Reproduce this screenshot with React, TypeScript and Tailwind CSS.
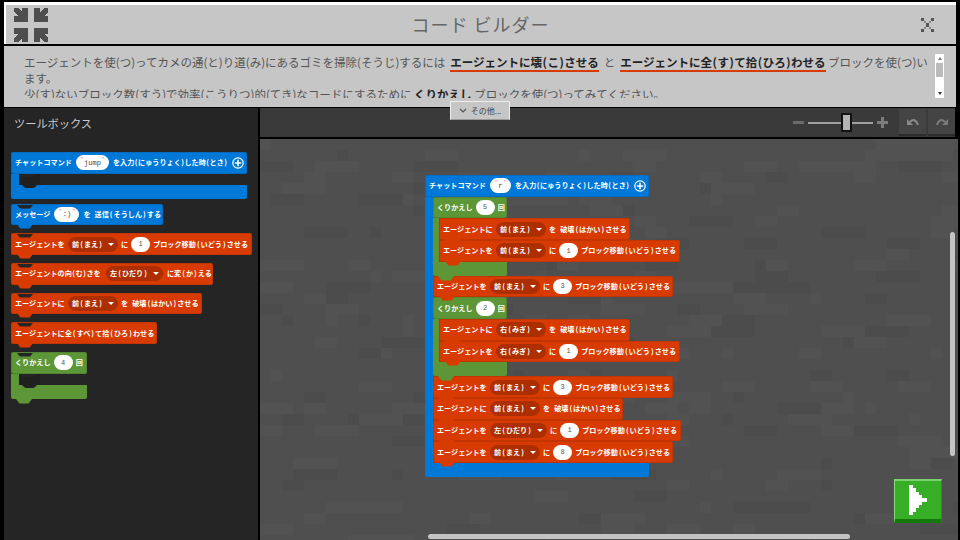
import React from "react";

const RED = "#d83b01";
const BLUE = "#0078d7";
const GREEN = "#5c9636";

const T = ({ s, cls = "mx-[1px]" }: { s: string; cls?: string }) => (
  <>
    {s.split(/([()])/).map((p, i) =>
      p === "(" || p === ")" ? (
        <span key={i} className={cls}>
          {p}
        </span>
      ) : (
        <React.Fragment key={i}>{p}</React.Fragment>
      )
    )}
  </>
);

const Tab = ({ color }: { color: string }) => (
  <svg width="17" height="5" viewBox="0 0 17 5" className="absolute left-[5px] top-full z-10 block">
    <path d="M0 0 L3 4 Q3.5 4.5 4 4.5 L12 4.5 Q12.5 4.5 13 4 L16 0 Z" fill={color} />
  </svg>
);

const Notch = () => (
  <svg width="17" height="4" viewBox="0 0 17 4" className="absolute left-[5px] top-0 block">
    <path d="M0 0 L3 3.5 L13 3.5 L16 0 Z" fill="#252525" />
  </svg>
);

const Pill = ({ children }: { children: React.ReactNode }) => (
  <span className="flex h-[15px] w-[19px] shrink-0 items-center justify-center rounded-full bg-white font-['Liberation_Mono',monospace] text-[7px] font-normal text-[#555]">
    {children}
  </span>
);

const Str = ({ children, w }: { children: React.ReactNode; w: string }) => (
  <span className={`relative flex h-[15px] shrink-0 items-center justify-center rounded-full bg-white font-['Liberation_Mono',monospace] text-[7px] font-normal text-[#444] ${w}`}>
    <span className="absolute left-[4px] top-[2px] text-[6px] leading-none text-[#c99]">"</span>
    {children}
    <span className="absolute right-[4px] top-[2px] text-[6px] leading-none text-[#c99]">"</span>
  </span>
);

const Drop = ({ children, w }: { children: string; w: string }) => (
  <span className={`flex h-[15px] shrink-0 items-center justify-center gap-[5px] rounded-full bg-[#ad2f01] ${w}`}>
    <span>
      <T s={children} />
    </span>
    <span className="h-0 w-0 border-x-[3px] border-t-[3px] border-x-transparent border-t-white" />
  </span>
);

const Plus = () => (
  <svg width="12" height="12" viewBox="0 0 12 12" className="shrink-0">
    <circle cx="6" cy="6" r="5.2" fill="none" stroke="#fff" strokeWidth="1.2" />
    <path d="M6 2.8V9.2M2.8 6H9.2" stroke="#fff" strokeWidth="1.6" />
  </svg>
);

const Row = ({ bg, w, gap, notch, tab = true, children }: { bg: string; w: string; gap?: string; notch?: boolean; tab?: boolean; children: React.ReactNode }) => (
  <div
    className={`relative flex h-[21.67px] shrink-0 items-center whitespace-nowrap rounded-[2px] border border-black/10 pl-[3px] font-['Noto_Sans_CJK_JP',sans-serif] text-[7.14px] font-bold text-white ${w} ${gap ?? "gap-[3px]"}`}
    style={{ backgroundColor: bg }}
  >
    {notch && <Notch />}
    {children}
    {tab && <Tab color={bg} />}
  </div>
);

type Dir = "mae" | "migi" | "hidari";
const label: Record<Dir, string> = { mae: "前(まえ)", migi: "右(みぎ)", hidari: "左(ひだり)" };

const Move = ({ d, n, w, notch }: { d: Dir; n: string; w: string; notch?: boolean }) => (
  <Row bg={RED} w={w} notch={notch}>
    <span className="w-[50px]">エージェントを</span>
    <Drop w={d === "hidari" ? "w-[57px]" : "w-[50px]"}>{label[d]}</Drop>
    <span>に</span>
    <Pill>{n}</Pill>
    <span>
      <T s="ブロック移動(いどう)させる" />
    </span>
  </Row>
);

const Destroy = ({ d, notch, w = "w-[191px]" }: { d: Dir; notch?: boolean; w?: string }) => (
  <Row bg={RED} w={w} notch={notch}>
    <span className="w-[50px]">エージェントに</span>
    <Drop w="w-[50px]">{label[d]}</Drop>
    <span>を</span>
    <span className="ml-[1px]">
      <T s="破壊(はかい)させる" />
    </span>
  </Row>
);

const Loop = ({ n, children }: { n: string; children: React.ReactNode }) => (
  <div className="relative flex flex-col">
    <Row bg={GREEN} w="w-[74px]" tab={false}>
      <span>くりかえし</span>
      <Pill>{n}</Pill>
      <span>回</span>
    </Row>
    <div className="flex">
      <div className="w-[6px] shrink-0" style={{ backgroundColor: GREEN }} />
      <div className="flex flex-col">{children}</div>
    </div>
    <div className="relative h-[14px] w-[74px] rounded-b-[2px]" style={{ backgroundColor: GREEN }}>
      <Tab color={GREEN} />
    </div>
  </div>
);

const GapNotch = () => (
  <svg width="21" height="14" viewBox="0 0 21 14" className="absolute left-[8px] top-0 z-10 block">
    <path d="M0 0 L3 3 H14 L18 0 H21 V11 H18 L16 13 Q15 14 14 14 H7 Q6 14 5 13 L3 11 H0 Z" fill="#202020" />
  </svg>
);

const Toolbox = () => (
  <aside className="flex w-[254px] shrink-0 flex-col bg-[#252525] pl-[7px]">
    <div className="pb-[20px] pl-[3px] pt-[6px] font-['Noto_Sans_CJK_JP',sans-serif] text-[11.2px] leading-[18px] text-[#ccc]">ツールボックス</div>
    <div className="flex flex-col">
      <Row bg={BLUE} w="w-[236px]" tab={false} gap="gap-[4px]">
        <span>チャットコマンド</span>
        <Str w="w-[33px]">jump</Str>
        <span>
          <T s="を入力(にゅうりょく)した時(とき)" cls="mx-[0.5px]" />
        </span>
        <Plus />
      </Row>
      <div className="relative flex h-[11px]">
        <div className="w-[8px]" style={{ backgroundColor: BLUE }} />
        <GapNotch />
      </div>
      <div className="relative h-[14px] w-[236px] rounded-b-[2px]" style={{ backgroundColor: BLUE }} />
    </div>
    <div className="mt-[5px]">
      <Row bg={BLUE} w="w-[152px]" notch gap="gap-[4px]">
        <span>メッセージ</span>
        <Str w="w-[25px]">:)</Str>
        <span>を</span>
        <span>
          <T s="送信(そうしん)する" />
        </span>
      </Row>
    </div>
    <div className="mt-[8px] flex flex-col gap-[8px]">
      <Move d="mae" n="1" w="w-[241px]" notch />
      <Row bg={RED} w="w-[202px]" notch gap="gap-[4px]">
        <span className="w-[87px]">
          <T s="エージェントの向(む)きを" cls="mx-[0.5px]" />
        </span>
        <Drop w="w-[57px]">左(ひだり)</Drop>
        <span>
          <T s="に変(か)える" />
        </span>
      </Row>
      <Destroy d="mae" notch />
      <Row bg={RED} w="w-[146px]" notch>
        <span>
          <T s="エージェントに全(すべ)て拾(ひろ)わせる" />
        </span>
      </Row>
    </div>
    <div className="mt-[8px] flex flex-col">
      <Row bg={GREEN} w="w-[76px]" notch tab={false}>
        <span>くりかえし</span>
        <Pill>4</Pill>
        <span>回</span>
      </Row>
      <div className="relative flex h-[11px]">
        <div className="w-[8px]" style={{ backgroundColor: GREEN }} />
        <GapNotch />
      </div>
      <div className="relative h-[14px] w-[76px] rounded-b-[2px]" style={{ backgroundColor: GREEN }}>
        <Tab color={GREEN} />
      </div>
    </div>
  </aside>
);

const Program = () => (
  <div className="absolute left-[165px] top-[36px] flex flex-col">
    <Row bg={BLUE} w="w-[224px]" tab={false} gap="gap-[4px]">
      <span>チャットコマンド</span>
      <Str w="w-[21px]">r</Str>
      <span>
        <T s="を入力(にゅうりょく)した時(とき)" cls="mx-[0.5px]" />
      </span>
      <Plus />
    </Row>
    <div className="flex">
      <div className="w-[8px] shrink-0" style={{ backgroundColor: BLUE }} />
      <div className="flex flex-col">
        <Loop n="5">
          <Destroy d="mae" />
          <Move d="mae" n="1" w="w-[241px]" />
        </Loop>
        <Move d="mae" n="3" w="w-[240px]" />
        <Loop n="2">
          <Destroy d="migi" />
          <Move d="migi" n="1" w="w-[241px]" />
        </Loop>
        <Move d="mae" n="3" w="w-[240px]" />
        <Destroy d="mae" w="w-[190px]" />
        <Move d="hidari" n="1" w="w-[248px]" />
        <Move d="mae" n="8" w="w-[240px]" />
      </div>
    </div>
    <div className="h-[14px] w-[224px] rounded-b-[2px]" style={{ backgroundColor: BLUE }} />
  </div>
);

const tiles: { x: number; y: number; w: number; fill: string }[] = [];
for (let r = 0; r < 37; r++) {
  let c = 0;
  while (c < 64) {
    const h = ((r * 131 + c * 71 + r * c * 17) * 2654435761) >>> 0;
    const v = (h >>> 8) % 100;
    const len = 1 + ((h >>> 16) % 4);
    if (v < 16) tiles.push({ x: c * 11, y: r * 11, w: len * 11, fill: "#525252" });
    else if (v < 26) tiles.push({ x: c * 11, y: r * 11, w: len * 11, fill: "#4c4c4c" });
    c += len;
  }
}

const Workspace = () => (
  <section className="flex min-w-0 flex-1 flex-col gap-[2px]">
    <div className="mr-[3px] flex h-[29px] shrink-0 items-center justify-end bg-[#3a3a3a]">
      <div className="flex items-center">
        <span className="h-[3px] w-[11px] bg-[#6a6a6a]" />
        <span className="relative ml-[4px] h-[2px] w-[65px] bg-[#a0a0a0]">
          <span className="absolute left-[33px] top-[-9px] h-[19px] w-[11px] border-2 border-[#111] bg-[#b4b4b4]" />
        </span>
        <span className="relative ml-[4px] h-[11px] w-[11px]">
          <span className="absolute left-0 top-[4px] h-[3px] w-[11px] bg-[#7c7c7c]" />
          <span className="absolute left-[4px] top-0 h-[11px] w-[3px] bg-[#7c7c7c]" />
        </span>
      </div>
      <div className="ml-[11px] flex gap-[2px]">
        <button className="flex h-[27px] w-[27px] items-center justify-center border-b-2 border-[#2c2c2c] bg-[#444]">
          <svg width="14" height="12" viewBox="0 0 14 12">
            <path d="M1 3V9H7Z" fill="#8a8a8a" />
            <path d="M4 6Q9 1 12 9" fill="none" stroke="#8a8a8a" strokeWidth="2" />
          </svg>
        </button>
        <button className="flex h-[27px] w-[27px] items-center justify-center border-b-2 border-[#2c2c2c] bg-[#444]">
          <svg width="14" height="12" viewBox="0 0 14 12">
            <path d="M13 3V9H7Z" fill="#7a7a7a" />
            <path d="M10 6Q5 1 2 9" fill="none" stroke="#7a7a7a" strokeWidth="2" />
          </svg>
        </button>
      </div>
    </div>
    <div className="relative min-h-0 flex-1 overflow-hidden bg-[#4f4f4f]">
      <svg width="698" height="402" className="absolute left-0 top-0" shapeRendering="crispEdges">
        {tiles.map((t, i) => (
          <rect key={i} x={t.x} y={t.y} width={t.w} height="11" fill={t.fill} />
        ))}
      </svg>
      <Program />
      <div className="absolute right-[3px] top-[93px] h-[224px] w-[5px] rounded-full bg-[#c4c4c4]" />
      <div className="absolute bottom-[1px] left-[168px] h-[5px] w-[422px] rounded-full bg-[#c4c4c4]" />
      <button className="absolute bottom-[17px] right-[16px] flex h-[44px] w-[48px] items-center justify-center border-x border-b-[4px] border-t-2 border-b-[#157a0c] border-l-[#8fd682] border-r-[#2a8f1c] border-t-[#7fd070] bg-[#36ae25]">
        <svg width="18" height="30" viewBox="0 0 18 30" shapeRendering="crispEdges">
          <path d="M0 0H4V3H7V7H10V10H13V13H18V17H13V20H10V23H7V27H4V30H0Z" fill="#fff" />
        </svg>
      </button>
    </div>
  </section>
);

const Corner = ({ cls }: { cls: string }) => (
  <svg width="14" height="14" viewBox="0 0 14 14" shapeRendering="crispEdges" className={cls}>
    <path d="M0 0H4L8 4V0H14V14H0V8H4L0 4Z" fill="#4e4e4e" />
  </svg>
);

export default function App() {
  return (
    <div className="flex h-[540px] w-[960px] flex-col overflow-hidden bg-black pl-[4px] pr-[2px] pt-[2px]">
      <header className="mr-[2px] flex h-[42px] shrink-0 items-center border-l-2 border-t-[3px] border-white bg-[#c6c6c6] pl-[8px] pr-[22px] font-['Noto_Sans_CJK_JP',sans-serif]">
        <div className="grid w-[34px] grid-cols-[14px_14px] gap-x-[6px] gap-y-[6px]">
          <Corner cls="" />
          <Corner cls="-scale-x-100" />
          <Corner cls="-scale-y-100" />
          <Corner cls="scale-[-1]" />
        </div>
        <h1 className="flex-1 pr-[8px] text-center text-[18px] font-normal tracking-[1px] text-[#666]">コード ビルダー</h1>
        <svg width="13" height="14" viewBox="0 0 13 14" shapeRendering="crispEdges" fill="#555">
          <rect x="0" y="0" width="3" height="3" />
          <rect x="10" y="0" width="3" height="3" />
          <rect x="0" y="11" width="3" height="3" />
          <rect x="10" y="11" width="3" height="3" />
          <rect x="3" y="3" width="2" height="2" fill="#888" />
          <rect x="8" y="3" width="2" height="2" fill="#888" />
          <rect x="3" y="9" width="2" height="2" fill="#888" />
          <rect x="8" y="9" width="2" height="2" fill="#888" />
          <rect x="5" y="5" width="3" height="4" />
        </svg>
      </header>
      <div className="relative z-20 mr-[2px] mt-[2px] h-[61px] shrink-0 bg-[#c6c6c6]">
        <div className="h-[52px] overflow-hidden whitespace-nowrap pl-[20px] pt-[8px] font-['Noto_Sans_CJK_JP',sans-serif] text-[11.5px] leading-[16px] text-[#555]">
          エージェントを使(つ)ってカメの通(と)り道(み)にあるゴミを掃除(そうじ)するには
          <span className="ml-[5px]" />
          <b className="border-b-2 border-[#d83b01] text-[#222]">
            <T s="エージェントに壊(こ)させる" cls="mx-[0.5px]" />
          </b>
          <span className="mx-[5px]">と</span>
          <b className="border-b-2 border-[#d83b01] text-[#222]">
            <T s="エージェントに全(す)て拾(ひろ)わせる" cls="mx-[0.5px]" />
          </b>{" "}
          ブロックを使(つ)い
          <br />
          ます。
          <br />
          少(す)ないブロック数(すう)で効率(こうりつ)的(てき)なコードにするために <b className="text-[#222]">くりかえし</b> ブロックを使(つ)ってみてください。
        </div>
        <div className="absolute right-[12px] top-[8px] flex h-[44px] w-[9px] flex-col items-center bg-white">
          <span className="mt-[3px] h-0 w-0 border-x-[2px] border-b-[3px] border-x-transparent border-b-[#777]" />
          <span className="mt-[3px] h-[14px] w-[7px] bg-[#bbb]" />
          <span className="mb-[3px] mt-auto h-0 w-0 border-x-[2px] border-t-[3px] border-x-transparent border-t-[#333]" />
        </div>
        <button className="absolute left-[446px] top-[55px] flex h-[19px] w-[60px] items-center justify-center gap-[4px] border border-[#eee] border-b-[#999] bg-[#c6c6c6] font-['Noto_Sans_CJK_JP',sans-serif] text-[8px] text-[#444]">
          <svg width="8" height="6" viewBox="0 0 8 6">
            <path d="M1 1L4 4L7 1" fill="none" stroke="#555" strokeWidth="1.2" />
          </svg>
          その他...
        </button>
      </div>
      <main className="mt-[1px] flex min-h-0 flex-1 gap-[2px]">
        <Toolbox />
        <Workspace />
      </main>
    </div>
  );
}
